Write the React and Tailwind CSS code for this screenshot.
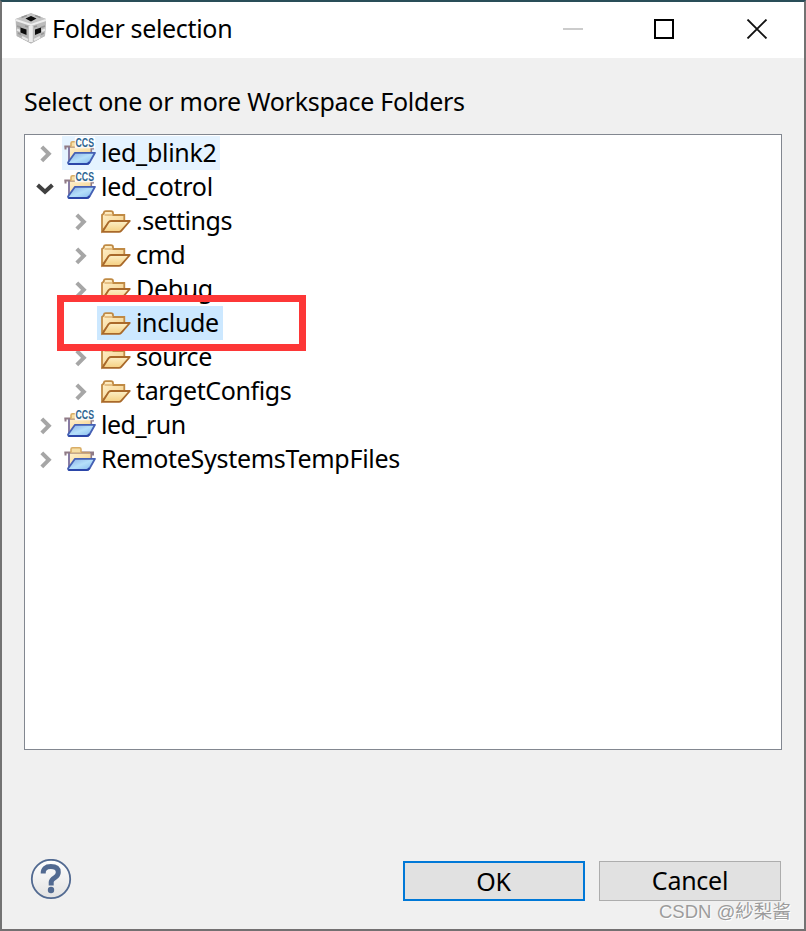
const tree = [
  { name: "led_blink2", level: 0, icon: "ccs", state: "closed", highlight: "hover", tracking: "tracking-[-0.28px]" },
  { name: "led_cotrol", level: 0, icon: "ccs", state: "open", tracking: "tracking-[-0.27px]" },
  { name: ".settings", level: 1, icon: "folder", state: "closed", tracking: "tracking-[-0.45px]" },
  { name: "cmd", level: 1, icon: "folder", state: "closed", tracking: "tracking-[-0.57px]" },
  { name: "Debug", level: 1, icon: "folder", state: "closed", tracking: "tracking-[-0.33px]" },
  { name: "include", level: 1, icon: "folder", state: "none", highlight: "selected", tracking: "tracking-[-0.35px]" },
  { name: "source", level: 1, icon: "folder", state: "closed", tracking: "tracking-[-0.44px]" },
  { name: "targetConfigs", level: 1, icon: "folder", state: "closed", tracking: "tracking-[-0.39px]" },
  { name: "led_run", level: 0, icon: "ccs", state: "closed", tracking: "tracking-[-0.5px]" },
  { name: "RemoteSystemsTempFiles", level: 0, icon: "project", state: "closed", tracking: "tracking-[-0.28px]" },
];

function Chevron({ state }) {
  if (state === "open") {
    return (
      <svg className="w-5 h-[34px] shrink-0" viewBox="0 0 20 34" fill="none">
        <path d="M2.6 15L10 21.8L17.4 15" stroke="#404040" strokeWidth="4" />
      </svg>
    );
  }
  return (
    <svg className="w-5 h-[34px] shrink-0" viewBox="0 0 20 34" fill="none">
      {state === "closed" && (
        <path d="M6.8 10.8L13.8 17.8L6.8 24.8" stroke="#a6a6a6" strokeWidth="4" />
      )}
    </svg>
  );
}

function FolderIcon() {
  return (
    <svg className="w-8 h-[34px] shrink-0" viewBox="0 0 32 34">
      <path
        d="M2 27V11L3.8 9.5V8.7Q4 7.2 5.8 7.2H11Q13 7.2 13 9V11H24.3V17.5H10L2 27Z"
        fill="url(#folderBack)"
        stroke="#c08a44"
        strokeWidth="1.8"
      />
      <path d="M4.5 11H13" stroke="#dcae6c" strokeWidth="1.4" />
      <path
        d="M2.4 27.9L8.5 18.3Q9.5 17 11 17H29.8L21.2 26.9Q20.3 27.9 19 27.9Z"
        fill="url(#folderFront)"
        stroke="#a9692a"
        strokeWidth="1.8"
        strokeLinejoin="round"
      />
    </svg>
  );
}

function ProjectIcon({ ccs }) {
  return (
    <svg className="w-8 h-[34px] shrink-0 overflow-visible" viewBox="0 0 32 34">
      <path d="M4.5 27V11H27.3V17H11L5 27Z" fill="url(#folderBack)" />
      <path d="M5 11V26" stroke="#7c70a0" strokeWidth="1.8" />
      <path d="M0.3 10.6H30M1.5 10V13.5M29 10V13.5" stroke="#907b86" strokeWidth="2" fill="none" />
      <path d="M27.3 10V16" stroke="#907b86" strokeWidth="1.6" />
      <path d="M6 10.6H26" stroke="#c39a6c" strokeWidth="1.6" />
      <path
        d="M7 10.5V7.2Q7 5.7 8.5 5.7H15.5Q17 5.7 17 7.2V10.5"
        fill="#f6dfa5"
        stroke="#d9ad66"
        strokeWidth="1.6"
      />
      <path
        d="M4 26.5L11 16.8H31L25.5 26.5Q24.5 28.2 22.5 28.2H6Q4 28.2 4 26.5Z"
        fill="url(#projectFront)"
        stroke="#4560b4"
        strokeWidth="1.8"
        strokeLinejoin="round"
      />
      <path d="M4.5 28H22.5Q24.5 28 25.5 26" stroke="#2b46a8" strokeWidth="2" fill="none" />
      {ccs && (
        <>
          <rect x="10.8" y="0.8" width="20.4" height="11.4" rx="1" fill="#fff" fillOpacity="0.9" />
          <text
            x="11.5"
            y="11"
            textLength="18.5"
            lengthAdjust="spacingAndGlyphs"
            fontFamily="Liberation Sans"
            fontWeight="700"
            fontSize="12.5"
            letterSpacing="0"
            fill="#2e6491"
          >
            CCS
          </text>
        </>
      )}
    </svg>
  );
}

function IconGradients() {
  return (
    <svg className="absolute w-0 h-0">
      <defs>
        <linearGradient id="folderBack" x1="0" y1="0" x2="1" y2="1">
          <stop offset="0" stopColor="#fff1cc" />
          <stop offset="1" stopColor="#f4ce85" />
        </linearGradient>
        <linearGradient id="folderFront" x1="0" y1="0" x2="0" y2="1">
          <stop offset="0" stopColor="#fdf0c8" />
          <stop offset="1" stopColor="#f5cf80" />
        </linearGradient>
        <linearGradient id="projectFront" x1="0" y1="0" x2="1" y2="1">
          <stop offset="0" stopColor="#86abe4" />
          <stop offset="0.5" stopColor="#b5e0fa" />
          <stop offset="1" stopColor="#80b5eb" />
        </linearGradient>
        <linearGradient id="helpFill" x1="0" y1="0" x2="0" y2="1">
          <stop offset="0" stopColor="#ffffff" />
          <stop offset="1" stopColor="#e2e2e2" />
        </linearGradient>
        <filter id="soften">
          <feGaussianBlur stdDeviation="0.75" />
        </filter>
      </defs>
    </svg>
  );
}

function CubeIcon() {
  return (
    <svg className="w-8 h-8 shrink-0" viewBox="0 0 32 32">
      <g filter="url(#soften)">
        <path d="M0.5 6L16 0L31 6L30 23L16 30.5L1.5 23Z" fill="#bcbcbc" />
        <path d="M1 6L16 0.5L31 6L16 12Z" fill="#c4c4c4" />
        <path d="M1 7L16 12V30.5L2 23Z" fill="#b5b5b5" />
        <path d="M31 7L16 12V30.5L30 23Z" fill="#bcbcbc" />
        <path d="M1 7L16 12L31 7" stroke="#eeeeee" strokeWidth="2" fill="none" />
        <path d="M6.5 4.5L12 2.5M20 2.5L25.5 4.5" stroke="#989898" strokeWidth="1.5" />
        <path d="M2 13L6 14.5M26 14.5L30 13M3 20L6 21.5M26 21.5L29 20M10 13L13 14M19 14L22 13" stroke="#989898" strokeWidth="1.5" />
        <path d="M2 16.5L5 18M27 18L30 16.5M7 24L13 27M19 27L25 24" stroke="#e8e8e8" strokeWidth="2" />
        <path d="M15.8 13V29" stroke="#ededed" strokeWidth="4" />
        <path d="M10.5 5.5L16 3L21.5 5.5L16 8.5Z" fill="#080808" />
        <path d="M5.5 14.5L11.5 16.5V22L5.5 19.5Z" fill="#101010" />
        <path d="M20 16.5L26 14.5V19.5L20 22Z" fill="#101010" />
      </g>
    </svg>
  );
}

function TreeRow({ item }) {
  const indent = item.level === 0 ? "pl-[10px]" : "pl-[45px]";
  const gap = item.level === 0 ? "pl-[5px] pr-[3px]" : "pl-[4px] pr-[4px]";
  let label = "";
  if (item.highlight === "hover") label = "bg-[#e5f3ff]";
  if (item.highlight === "selected") label = "bg-[#cce8ff]";

  return (
    <div className={`flex h-[34px] items-center ${indent}`}>
      <Chevron state={item.state} />
      <div className={`flex h-[34px] items-center ml-[7px] ${label} ${item.level === 0 ? "pl-[2px]" : "pl-[3px]"}`}>
        {item.icon === "folder" ? <FolderIcon /> : <ProjectIcon ccs={item.icon === "ccs"} />}
        <span className={`${gap} leading-8 pb-[2px] whitespace-nowrap ${item.tracking}`}>
          {item.name}
        </span>
      </div>
    </div>
  );
}

function App() {
  return (
    <div className="relative flex flex-col w-[806px] h-[931px] bg-[#f0f0f0] border-2 border-t-[#294d58] border-x-[#737373] border-b-[#737071] text-black text-[25px] font-['Noto_Sans','Noto_Sans_CJK_SC',sans-serif] overflow-hidden">
      <IconGradients />
      <header className="flex shrink-0 h-14 items-center bg-white pl-[13px] pb-[2px]">
        <CubeIcon />
        <h1 className="ml-[5px] leading-8 pb-[2px] tracking-[-0.33px] whitespace-nowrap">Folder selection</h1>
        <svg className="ml-auto mr-[35px] w-[206px] h-5" viewBox="0 0 206 20" fill="none">
          <path d="M0 10H20" stroke="#cccccc" strokeWidth="2" />
          <rect x="92" y="1" width="18" height="18" stroke="#000" strokeWidth="2" />
          <path d="M184.5 0.5L203.5 19.5M203.5 0.5L184.5 19.5" stroke="#111" strokeWidth="1.8" />
        </svg>
      </header>

      <main className="flex flex-col flex-1 px-[22px]">
        <p className="mt-[27px] h-[34px] leading-8 tracking-[-0.25px] whitespace-nowrap">
          Select one or more Workspace Folders
        </p>
        <div className="mt-[15px] h-[616px] w-[758px] bg-white border border-[#828790] pt-px">
          {tree.map((item) => (
            <TreeRow key={item.name} item={item} />
          ))}
        </div>

        <footer className="flex items-start mt-[109px]">
          <svg className="w-[42px] h-[42px] ml-[6px]" viewBox="0 0 42 42">
            <circle cx="21" cy="20" r="19.2" fill="url(#helpFill)" stroke="#526a91" strokeWidth="1.8" />
            <path
              d="M13.2 14.5Q13 7.6 20.8 7.6Q28.3 7.6 28.3 13.2Q28.3 16.3 25 18.5Q21.2 21 21.2 23V26.5"
              fill="none"
              stroke="#526a91"
              strokeWidth="5"
            />
            <circle cx="21" cy="31" r="3.2" fill="#526a91" />
          </svg>
          <button className="ml-auto mt-[2px] w-[182px] h-10 pr-px pb-[2px] bg-[#e1e1e1] border-2 border-[#0078d7] tracking-[-0.2px]">
            OK
          </button>
          <button className="ml-[14px] mt-[2px] mr-px w-[182px] h-10 bg-[#e1e1e1] border border-[#adadad] tracking-[-0.25px]">
            Cancel
          </button>
        </footer>
      </main>

      <div className="absolute left-[55px] top-[293px] w-[249px] h-[56px] border-[7px] border-[#fd3737]" />
      <div className="absolute left-[657px] top-[896px] text-[18.5px] leading-7 whitespace-nowrap text-[#9c9c9c] font-['Liberation_Sans','Noto_Sans_CJK_SC',sans-serif] [text-shadow:1px_1px_0_#fff]">
        CSDN @紗梨酱
      </div>
    </div>
  );
}

export default App;
